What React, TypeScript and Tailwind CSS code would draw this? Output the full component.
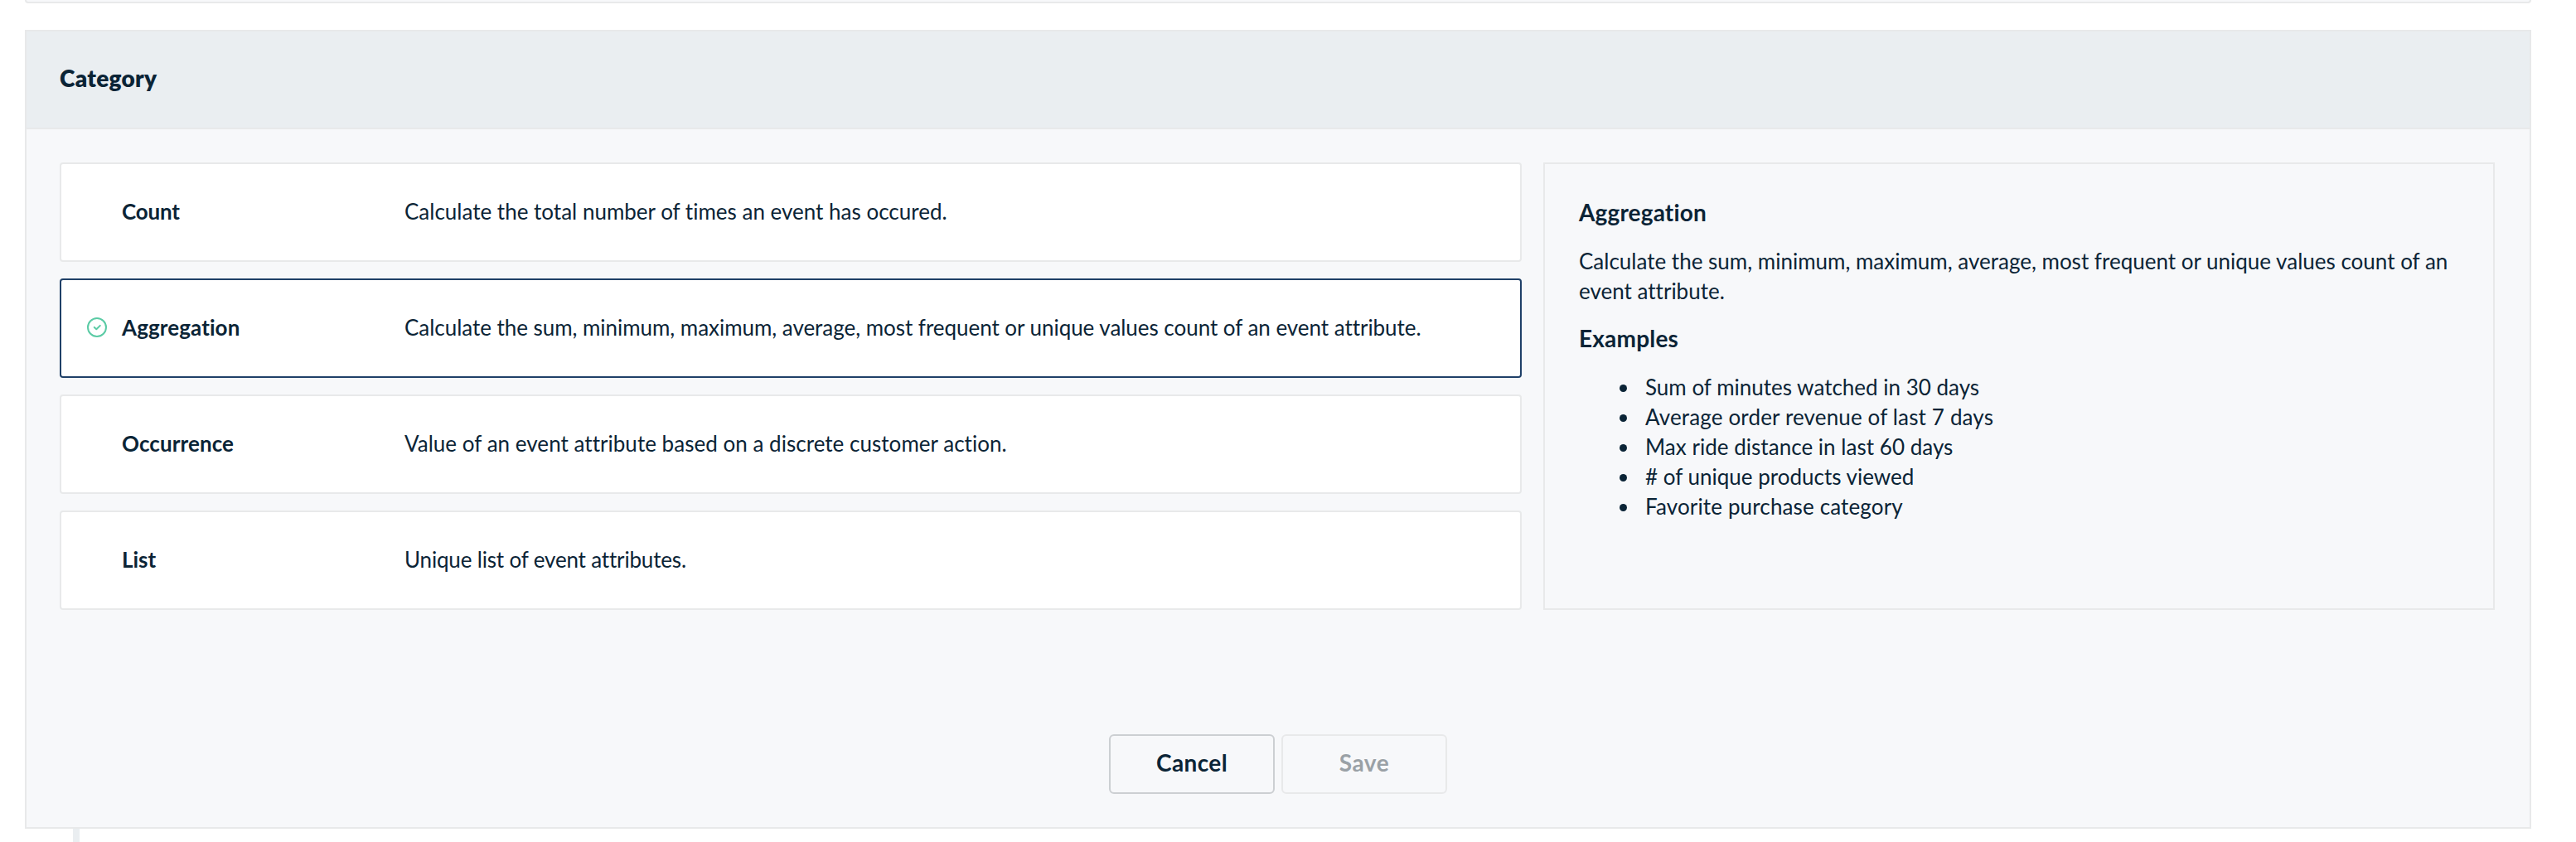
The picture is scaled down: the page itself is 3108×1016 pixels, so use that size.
type Category = {
  name: string;
  description: string;
  selected?: boolean;
  nameClass: string;
  descriptionClass: string;
};

const categories: Category[] = [
  {
    name: "Count",
    description: "Calculate the total number of times an event has occured.",
    nameClass: "tracking-[-0.2px]",
    descriptionClass: "",
  },
  {
    name: "Aggregation",
    description:
      "Calculate the sum, minimum, maximum, average, most frequent or unique values count of an event attribute.",
    selected: true,
    nameClass: "tracking-[0.1px]",
    descriptionClass: "tracking-[-0.04px]",
  },
  {
    name: "Occurrence",
    description: "Value of an event attribute based on a discrete customer action.",
    nameClass: "tracking-[0.1px]",
    descriptionClass: "tracking-[0.03px]",
  },
  {
    name: "List",
    description: "Unique list of event attributes.",
    nameClass: "",
    descriptionClass: "tracking-[-0.17px]",
  },
];

const examples = [
  { text: "Sum of minutes watched in 30 days", textClass: "" },
  { text: "Average order revenue of last 7 days", textClass: "tracking-[0.15px]" },
  { text: "Max ride distance in last 60 days", textClass: "tracking-[0.03px]" },
  { text: "# of unique products viewed", textClass: "" },
  { text: "Favorite purchase category", textClass: "tracking-[0.14px]" },
];

function CheckCircle() {
  return (
    <svg width="24" height="24" viewBox="0 0 24 24" fill="none" stroke="#5bcba5" strokeWidth="2" strokeLinecap="round" strokeLinejoin="round">
      <circle cx="12" cy="12" r="11" />
      <path d="M8.8 11.9 11.3 14.2 15.8 9.9" />
    </svg>
  );
}

function CategoryCard({ name, description, selected, nameClass, descriptionClass }: Category) {
  return (
    <button
      type="button"
      className={`flex h-[120px] items-center rounded border-2 bg-white pb-0.5 text-left ${selected ? "border-[#1f4068]" : "border-[#e8e9ea]"}`}
    >
      <span className="ml-[31px] mr-[18px] flex size-6 items-center">{selected && <CheckCircle />}</span>
      <span className={`w-[341px] font-bold ${nameClass}`}>{name}</span>
      <span className={descriptionClass}>{description}</span>
    </button>
  );
}

function Details() {
  return (
    <aside className="w-[1148px] border-2 border-[#e8e9ea] pl-[41px] pr-10 pt-10">
      <h3 className="text-[28px] font-bold leading-9 tracking-[0.15px]">Aggregation</h3>
      <p className="mt-[23px]">
        Calculate the sum, minimum, maximum, average, most frequent or unique values count of an event attribute.
      </p>
      <h3 className="mt-[21px] text-[28px] font-bold leading-9 tracking-[0.2px]">Examples</h3>
      <ul className="mt-[23px] pl-[49px]">
        {examples.map((e) => (
          <li key={e.text} className="flex items-center">
            <span className="mr-[22px] mt-[3px] size-[9px] rounded-full bg-[#0b2436]" />
            <span className={e.textClass}>{e.text}</span>
          </li>
        ))}
      </ul>
    </aside>
  );
}

export default function App() {
  return (
    <div className="h-[1016px] w-[3108px] overflow-hidden bg-white pl-[30px] font-['Lato',sans-serif] text-[26px] leading-9 text-[#0b2436] [font-variant-ligatures:none]">
      <div className="h-1 w-[3024px] rounded-b border-x-2 border-b-2 border-[#e8e9ea] bg-[#f7f8fa]" />
      <section className="mt-8 flex h-[964px] w-[3024px] flex-col border-2 border-[#e8e9ea] bg-[#f7f8fa]">
        <header className="flex h-[118px] items-center border-b-2 border-[#e8e9ea] bg-[#eaeef1] pb-1 pl-10">
          <h2 className="text-[28px] font-extrabold tracking-[0.3px]">Category</h2>
        </header>
        <div className="flex gap-[26px] pl-10 pt-10">
          <div className="flex w-[1764px] flex-col gap-5">
            {categories.map((c) => (
              <CategoryCard key={c.name} {...c} />
            ))}
          </div>
          <Details />
        </div>
        <footer className="mt-[150px] flex justify-center gap-2 text-[28px] font-bold">
          <button type="button" className="h-[72px] w-[200px] rounded-md border-2 border-[#cccfd2] pb-1 tracking-[0.4px]">
            Cancel
          </button>
          <button type="button" disabled className="h-[72px] w-[200px] rounded-md border-2 border-[#e8e9ea] pb-1 tracking-[0.6px] text-[#9aa1a6]">
            Save
          </button>
        </footer>
      </section>
      <div className="ml-[58px] h-4 w-2 bg-[#eaeef1]" />
    </div>
  );
}
